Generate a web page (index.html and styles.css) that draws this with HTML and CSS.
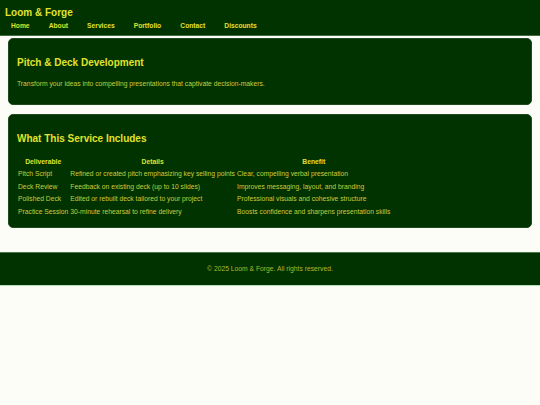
FILE: index.html
```html
<!DOCTYPE html>
<html lang="en">
<head>
<meta charset="utf-8">
<title>Pitch &amp; Deck Development - Loom &amp; Forge</title>
<link rel="stylesheet" href="styles.css">
</head>
<body>
<header class="site-header">
  <h1 class="brand">Loom &amp; Forge</h1>
  <nav class="nav">
    <a href="#">Home</a>
    <a href="#">About</a>
    <a href="#">Services</a>
    <a href="#">Portfolio</a>
    <a href="#">Contact</a>
    <a href="#">Discounts</a>
  </nav>
</header>
<main class="main">
  <section class="card intro">
    <h2 class="card-title">Pitch &amp; Deck Development</h2>
    <p class="card-text">Transform your ideas into compelling presentations that captivate decision-makers.</p>
  </section>
  <section class="card includes">
    <h2 class="card-title">What This Service Includes</h2>
    <table class="service-table">
      <thead>
        <tr><th>Deliverable</th><th>Details</th><th>Benefit</th></tr>
      </thead>
      <tbody>
        <tr><td>Pitch Script</td><td>Refined or created pitch emphasizing key selling points</td><td>Clear, compelling verbal presentation</td></tr>
        <tr><td>Deck Review</td><td>Feedback on existing deck (up to 10 slides)</td><td>Improves messaging, layout, and branding</td></tr>
        <tr><td>Polished Deck</td><td>Edited or rebuilt deck tailored to your project</td><td>Professional visuals and cohesive structure</td></tr>
        <tr><td>Practice Session</td><td>30-minute rehearsal to refine delivery</td><td>Boosts confidence and sharpens presentation skills</td></tr>
      </tbody>
    </table>
  </section>
</main>
<footer class="site-footer">
  <p class="footer-text">&copy; 2025 Loom &amp; Forge. All rights reserved.</p>
</footer>
</body>
</html>
```
FILE: styles.css
```css
html, body {
  margin: 0;
  padding: 0;
}
body {
  background: #fdfdf8;
  font-family: "Liberation Sans", Arial, sans-serif;
  font-size: 6.75px;
  color: #cccc3c;
}
.site-header {
  background: #003300;
  padding: 7px 5px 5px;
  border-bottom: 1px solid #3f6f3f;
}
.brand {
  margin: 0;
  font-size: 10px;
  line-height: 12px;
  font-weight: bold;
  color: #e2e22c;
}
.nav {
  display: flex;
  gap: 19.1px;
  margin-top: 3px;
  padding-left: 6px;
  line-height: 8px;
}
.nav a {
  color: #e2e22c;
  font-weight: bold;
  font-size: 6.7px;
  text-decoration: none;
}
.main {
  padding: 2px 8px 0;
  display: flex;
  flex-direction: column;
  gap: 9px;
}
.card {
  background: #003300;
  border: 1px solid #1e4a1e;
  border-radius: 5px;
  padding: 10px 8px;
}
.card-title {
  margin: 8px 0 12px;
  font-size: 10px;
  line-height: 11px;
  font-weight: bold;
  color: #e2e22c;
}
.card-text {
  margin: 0 0 6px;
  line-height: 8px;
}
.includes {
  padding-bottom: 9px;
}
.includes .card-title {
  margin-bottom: 12px;
}
.service-table {
  border-collapse: collapse;
  border-spacing: 0;
  font-size: 6.75px;
}
.service-table th,
.service-table td {
  padding: 0 1px;
  height: 12.4px;
  line-height: 10.4px;
  white-space: nowrap;
}
.service-table th {
  font-weight: bold;
  text-align: center;
  color: #e2e22c;
}
.service-table td {
  text-align: left;
  color: #cccc3c;
}
.site-footer {
  margin-top: 24px;
  background: #003300;
  border-top: 1px solid #4a7a4a;
  border-bottom: 1px solid #b8e0b8;
  padding: 12px 0;
  text-align: center;
}
.footer-text {
  margin: 0;
  line-height: 8px;
  color: #b4b828;
}
```
